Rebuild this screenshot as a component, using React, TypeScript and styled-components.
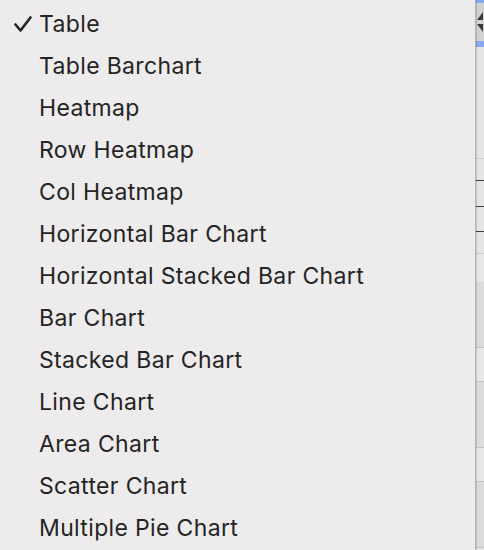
import React from "react";
import styled, { createGlobalStyle } from "styled-components";

const Global = createGlobalStyle`
  html, body { margin: 0; padding: 0; }
  body { background: #e4e4e4; overflow: hidden; }
`;

const Screen = styled.div`
  display: flex;
  width: 484px;
  height: 550px;
  overflow: hidden;
`;

const Menu = styled.div`
  width: 476px;
  height: 550px;
  flex: none;
  box-sizing: border-box;
  padding-top: 3px;
  background: #edebec;
  border-right: 1px solid #b4b4b4;
  box-shadow: 1px 0 1px rgba(0, 0, 0, 0.12);
  font-family: Inter, "Noto Sans", sans-serif;
  font-size: 23px;
  letter-spacing: 0.35px;
  color: #242424;
  position: relative;
  z-index: 1;
`;

const Item = styled.div`
  display: flex;
  align-items: center;
  height: 42px;
  line-height: 42px;
  white-space: nowrap;
`;

const CheckSlot = styled.div`
  width: 39px;
  flex: none;
  display: flex;
  align-items: center;
  padding-left: 14px;
  box-sizing: border-box;
`;

const Backdrop = styled.div`
  flex: 1;
  display: flex;
  flex-direction: column;
  background: #e2e2e2;
`;

const Seg = styled.div<{ $h: number; $bg: string; $line?: string }>`
  height: ${(p) => p.$h}px;
  flex: none;
  background: ${(p) => p.$bg};
  border-bottom: ${(p) => (p.$line ? `1px solid ${p.$line}` : "none")};
  box-sizing: border-box;
  display: flex;
  align-items: center;
`;

const items = [
  "Table",
  "Table Barchart",
  "Heatmap",
  "Row Heatmap",
  "Col Heatmap",
  "Horizontal Bar Chart",
  "Horizontal Stacked Bar Chart",
  "Bar Chart",
  "Stacked Bar Chart",
  "Line Chart",
  "Area Chart",
  "Scatter Chart",
  "Multiple Pie Chart",
];

const Check = () => (
  <svg width="18" height="16" viewBox="0 0 18 16">
    <path
      d="M1.5 8.5 L6.5 14.5 L16.5 1.5"
      fill="none"
      stroke="#242424"
      strokeWidth="2.6"
      strokeLinecap="round"
      strokeLinejoin="round"
    />
  </svg>
);

const Stepper = () => (
  <svg width="7" height="24" viewBox="0 0 7 24">
    <path d="M7 2 L1 10 L7 10 Z" fill="#3a3a3a" />
    <path d="M7 22 L1 14 L7 14 Z" fill="#3a3a3a" />
  </svg>
);

export default function App() {
  return (
    <>
      <Global />
      <Screen>
        <Menu>
          {items.map((t, i) => (
            <Item key={t}>
              <CheckSlot>{i === 0 ? <Check /> : null}</CheckSlot>
              {t}
            </Item>
          ))}
        </Menu>
        <Backdrop>
          <Seg $h={3} $bg="#86a9ef" />
          <Seg $h={38} $bg="#d2d2d2">
            <Stepper />
          </Seg>
          <Seg $h={6} $bg="#86a9ef" />
          <Seg $h={112} $bg="#e6e6e6" $line="#cfcfcf" />
          <Seg $h={22} $bg="#e6e6e6" $line="#3e3e3e" />
          <Seg $h={26} $bg="#e6e6e6" $line="#3e3e3e" />
          <Seg $h={25} $bg="#e6e6e6" $line="#3e3e3e" />
          <Seg $h={22} $bg="#e6e6e6" $line="#cccccc" />
          <Seg $h={28} $bg="#e8e8e8" />
          <Seg $h={66} $bg="#dcdcdc" $line="#c4c4c4" />
          <Seg $h={34} $bg="#e8e8e8" $line="#c4c4c4" />
          <Seg $h={66} $bg="#dcdcdc" $line="#c4c4c4" />
          <Seg $h={34} $bg="#e8e8e8" $line="#c4c4c4" />
          <Seg $h={66} $bg="#dcdcdc" $line="#c4c4c4" />
          <Seg $h={4} $bg="#e4e4e4" />
        </Backdrop>
      </Screen>
    </>
  );
}
